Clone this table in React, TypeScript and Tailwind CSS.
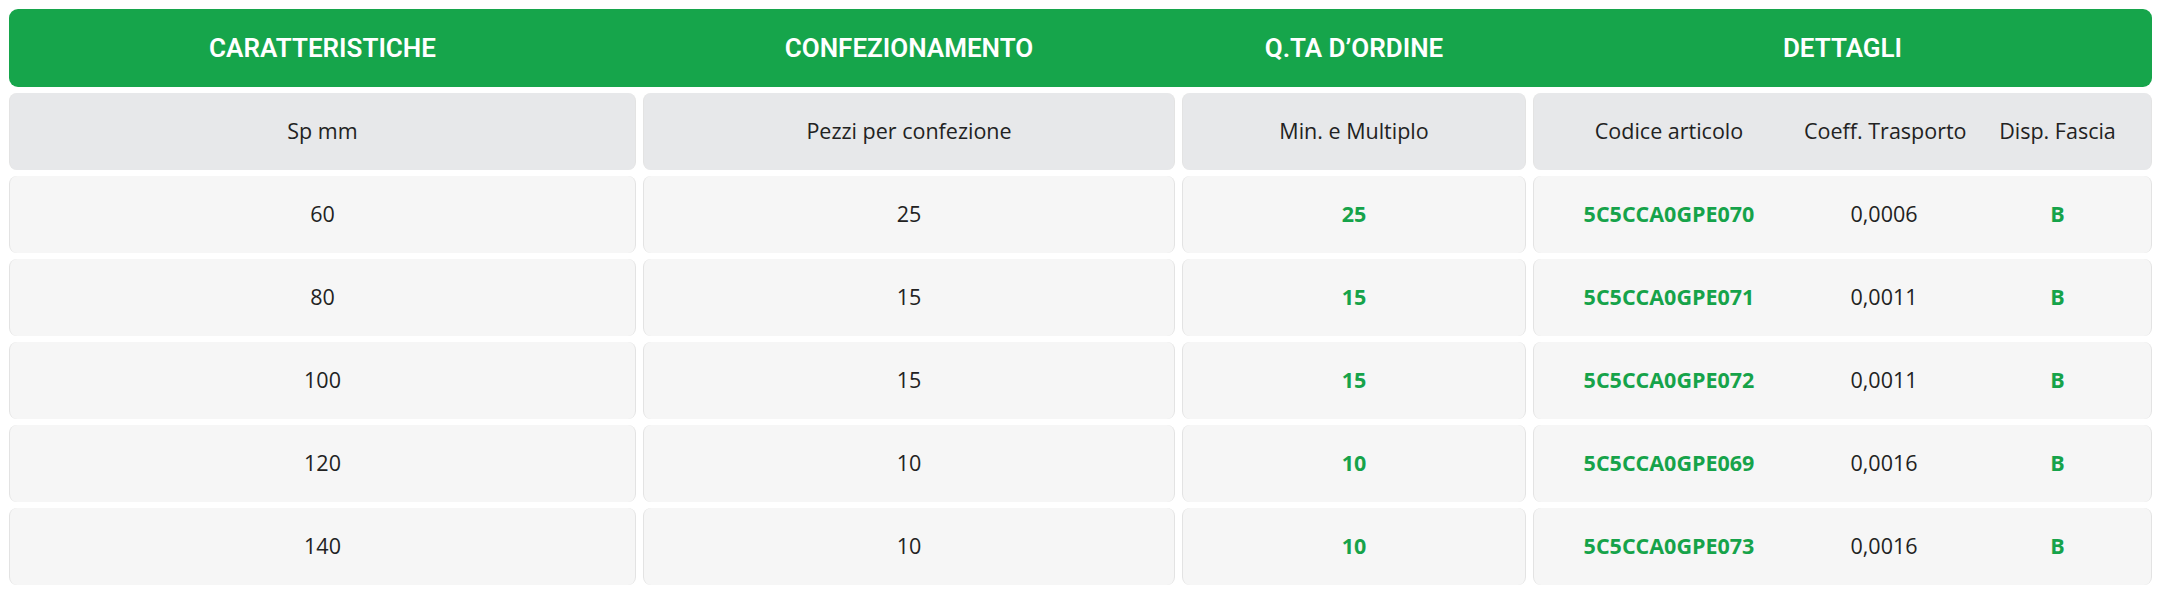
const rows = [
  { sp: "60", pezzi: "25", min: "25", code: "5C5CCA0GPE070", coeff: "0,0006", fascia: "B" },
  { sp: "80", pezzi: "15", min: "15", code: "5C5CCA0GPE071", coeff: "0,0011", fascia: "B" },
  { sp: "100", pezzi: "15", min: "15", code: "5C5CCA0GPE072", coeff: "0,0011", fascia: "B" },
  { sp: "120", pezzi: "10", min: "10", code: "5C5CCA0GPE069", coeff: "0,0016", fascia: "B" },
  { sp: "140", pezzi: "10", min: "10", code: "5C5CCA0GPE073", coeff: "0,0016", fascia: "B" },
];

const grid = "grid grid-cols-[627px_532px_344px_1fr] gap-x-[7px]";
const cell = "flex h-[77px] items-center justify-center rounded-[8px] border-x border-[#e3e3e3]";

function Details({ a, b, c, head }: { a: string; b: string; c: string; head?: boolean }) {
  return (
    <div className={`${cell} ${head ? "bg-[#e7e8ea]" : "bg-[#f6f6f6]"} justify-start`}>
      <div className={`w-[270px] text-center ${head ? "" : "font-bold text-[#16a34a]"}`}>{a}</div>
      <div className="w-[160px] whitespace-nowrap text-center">{b}</div>
      <div className={`flex-1 text-center ${head ? "" : "font-bold text-[#16a34a]"}`}>{c}</div>
    </div>
  );
}

export default function App() {
  return (
    <div className="min-h-screen bg-white pl-[9px] pr-[8px] pt-[9px] font-['Open_Sans',sans-serif] text-[21.5px] text-[#222]">
      <div className={`${grid} h-[78px] items-center rounded-[9px] bg-[#16a54b] font-['Roboto',sans-serif] text-[26px] font-semibold text-white`}>
        <div className="text-center">CARATTERISTICHE</div>
        <div className="text-center">CONFEZIONAMENTO</div>
        <div className="text-center">Q.TA D’ORDINE</div>
        <div className="text-center">DETTAGLI</div>
      </div>

      <div className={`${grid} mt-[6px] gap-y-[6px]`}>
        <div className={`${cell} bg-[#e7e8ea]`}>Sp mm</div>
        <div className={`${cell} bg-[#e7e8ea]`}>Pezzi per confezione</div>
        <div className={`${cell} bg-[#e7e8ea]`}>Min. e Multiplo</div>
        <Details head a="Codice articolo" b="Coeff. Trasporto" c="Disp. Fascia" />

        {rows.map((r) => (
          <div key={r.code} className="contents">
            <div className={`${cell} bg-[#f6f6f6]`}>{r.sp}</div>
            <div className={`${cell} bg-[#f6f6f6]`}>{r.pezzi}</div>
            <div className={`${cell} bg-[#f6f6f6] font-bold text-[#16a34a]`}>{r.min}</div>
            <Details a={r.code} b={r.coeff} c={r.fascia} />
          </div>
        ))}
      </div>
    </div>
  );
}
